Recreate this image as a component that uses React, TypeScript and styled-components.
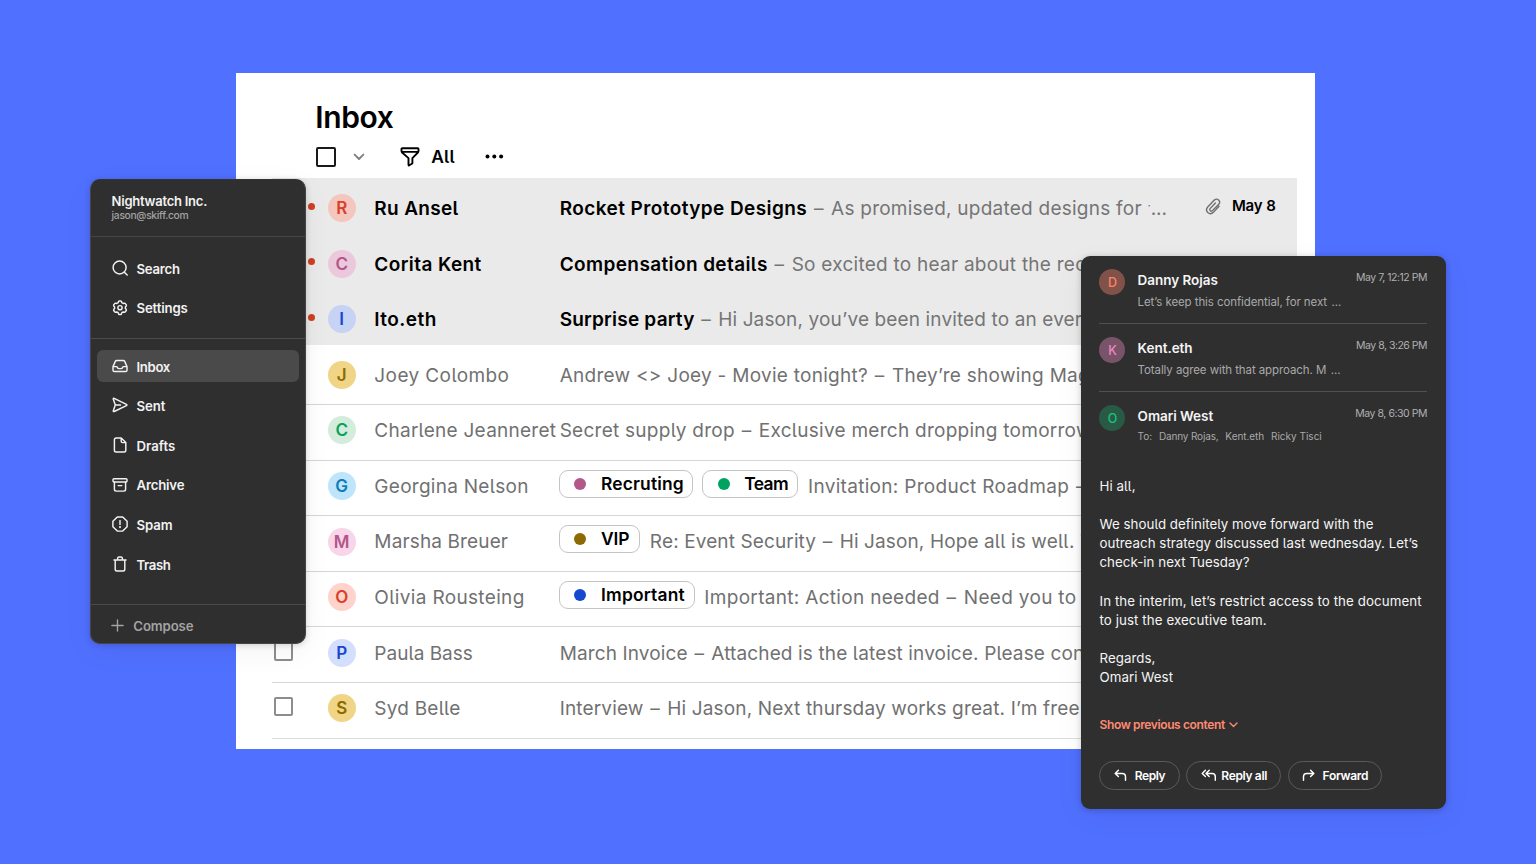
import React from "react";
import styled, { createGlobalStyle, css } from "styled-components";

const GlobalStyle = createGlobalStyle`
  *, *::before, *::after { box-sizing: border-box; }
  body { margin: 0; overflow: hidden; font-family: Inter, "Liberation Sans", sans-serif; }
  svg { display: block; flex: none; }
`;

const Stage = styled.main`
  position: relative;
  width: 1536px;
  height: 864px;
  overflow: hidden;
  background: #5070ff;
`;

const Tracked = styled.span<{ $ls?: number }>`
  letter-spacing: ${(p) => p.$ls ?? 0}px;
  white-space: pre;
`;

/* ---------- Inbox window ---------- */

const InboxWindow = styled.section`
  position: absolute;
  left: 236.3px;
  top: 73.4px;
  width: 1078.7px;
  height: 675.6px;
  padding: 0 17.7px 0 36.2px;
  background: #fff;
  font-feature-settings: "cv05";
  overflow: hidden;
`;

const InboxHeader = styled.header`
  height: 105px;
  padding: 25.5px 0 0 43.8px;
`;

const Title = styled.h1`
  margin: 0 0 0 -1px;
  font-size: 30px;
  font-weight: 600;
  line-height: 36px;
  letter-spacing: -0.4px;
  color: #000;
`;

const Toolbar = styled.div`
  display: flex;
  align-items: center;
  height: 20px;
  margin-top: 11.9px;
  font-size: 17.4px;
  font-weight: 600;
`;

const Checkbox = styled.span<{ $strong?: boolean }>`
  flex: none;
  width: ${(p) => (p.$strong ? 20 : 19.5)}px;
  height: ${(p) => (p.$strong ? 20 : 19.5)}px;
  border: ${(p) => (p.$strong ? "2px solid #1a1a1a" : "2px solid #8d8d8d")};
  border-radius: 2px;
`;

const MenuArrow = styled.span`
  margin-left: 16.4px;
`;

const FilterButton = styled.span`
  display: flex;
  align-items: center;
  gap: 11.2px;
  margin-left: 35.4px;
`;

const MoreButton = styled.span`
  margin-left: 29px;
`;

const UnreadGroup = styled.div`
  padding-top: 3.8px;
  height: 166.7px;
  margin-bottom: 4.4px;
  background: #eaeaea;
`;

const Row = styled.div<{ $unread?: boolean; $last?: boolean }>`
  display: flex;
  align-items: center;
  height: 55.6px;
  padding-bottom: 3.4px;
  font-size: 19px;
  line-height: 24px;
  color: ${(p) => (p.$unread ? "#000" : "#717171")};
  ${(p) =>
    !p.$unread &&
    css`
      padding-bottom: 3.8px;
      border-bottom: 1px solid ${p.$last ? "#dedede" : "#d6d6d6"};
    `}
`;

const Marker = styled.span`
  flex: none;
  display: flex;
  justify-content: space-between;
  align-items: center;
  width: 55.2px;
  padding: 0 12.3px 4px 1.3px;
`;

const UnreadDot = styled.i`
  width: 7px;
  height: 7px;
  margin-left: auto;
  border-radius: 50%;
  background: #cf4022;
`;

const Avatar = styled.span<{ $bg: string; $fg: string }>`
  flex: none;
  display: grid;
  place-items: center;
  width: 28px;
  height: 28px;
  margin-right: 18.7px;
  border-radius: 50%;
  background: ${(p) => p.$bg};
  color: ${(p) => p.$fg};
  font-size: 17px;
  font-weight: 600;
`;

const Sender = styled.span<{ $ls: number; $unread?: boolean }>`
  flex: none;
  width: 185.3px;
  padding-top: 1.5px;
  white-space: nowrap;
  letter-spacing: ${(p) => p.$ls}px;
  font-weight: ${(p) => (p.$unread ? 600 : 400)};
`;

const Subject = styled.span`
  flex: 1;
  display: flex;
  align-items: center;
  min-width: 0;
  padding-top: 1.5px;
  white-space: pre;
`;

const SubjectTitle = styled(Tracked)`
  font-weight: 600;
`;

const Preview = styled(Tracked)`
  color: #757575;
`;

const Dash = styled.span`
  margin: 0 1.8px 0 1.2px;
`;

const Speck = styled.span`
  padding-bottom: 6px;
  color: #757575;
  font-size: 12px;
`;

const Dots = styled.span`
  letter-spacing: -0.2px;
  color: #757575;
`;

const Tag = styled.span<{ $w: number }>`
  flex: none;
  display: flex;
  align-items: center;
  width: ${(p) => p.$w}px;
  height: 28px;
  margin: -6.1px 9.8px 0 -0.6px;
  padding-left: 14.4px;
  border: 1.4px solid #c4c4c4;
  border-radius: 9px;
  color: #000;
  font-size: 17.4px;
  font-weight: 600;
`;

const TagDot = styled.i<{ $c: string }>`
  flex: none;
  width: 12px;
  height: 12px;
  margin-right: 14.6px;
  border-radius: 50%;
  background: ${(p) => p.$c};
`;

const Meta = styled.span`
  display: flex;
  align-items: center;
  gap: 11.4px;
  padding: 0 21.6px 4px 0;
  font-size: 15px;
  font-weight: 600;
  letter-spacing: -0.12px;
`;

/* ---------- Sidebar ---------- */

const Sidebar = styled.nav`
  position: absolute;
  left: 90.3px;
  top: 179px;
  width: 215.3px;
  height: 465.4px;
  border: 1px solid #454545;
  border-top-color: #333;
  border-radius: 10px;
  background: #2f2f2f;
  box-shadow: 0 1px 6px rgba(0, 0, 0, 0.16), 0 8px 30px rgba(0, 0, 0, 0.05);
  color: #f2f2f2;
  overflow: hidden;
`;

const Account = styled.header`
  height: 57.3px;
  padding: 12.8px 0 0 20.3px;
  border-bottom: 1.4px solid #464646;
`;

const AccountName = styled.div`
  font-size: 13px;
  font-weight: 600;
  line-height: 16px;
  letter-spacing: -0.24px;
`;

const AccountEmail = styled.div`
  margin-top: -0.8px;
  font-size: 10.3px;
  font-weight: 500;
  line-height: 14px;
  letter-spacing: -0.33px;
  color: #a3a3a3;
`;

const NavGroup = styled.div<{ $h: number; $top: number }>`
  display: flex;
  flex-direction: column;
  gap: 7.6px;
  height: ${(p) => p.$h}px;
  padding: ${(p) => p.$top}px 6px 0 6px;
  border-bottom: 1.2px solid #4a4a4a;
`;

const NavItem = styled.a<{ $active?: boolean; $ls: number }>`
  flex: none;
  display: flex;
  align-items: center;
  gap: 8.2px;
  height: 32px;
  padding: 1px 0 0 15px;
  border-radius: 6px;
  background: ${(p) => (p.$active ? "#4a4a4a" : "transparent")};
  font-size: 13.2px;
  font-weight: 600;
  letter-spacing: ${(p) => p.$ls}px;

  svg {
    margin-top: -1.6px;
  }
`;

const Compose = styled.div`
  display: flex;
  align-items: center;
  gap: 9px;
  height: 41px;
  padding: 0.6px 0 0 20px;
  font-size: 13.2px;
  font-weight: 600;
  letter-spacing: -0.12px;
  color: #a3a3a3;

  svg {
    margin-top: -1.4px;
  }
`;

/* ---------- Thread window ---------- */

const Thread = styled.section`
  position: absolute;
  left: 1080.6px;
  top: 256px;
  width: 365.4px;
  height: 552.6px;
  padding: 0 19px 0 18.9px;
  border-radius: 9px;
  background: #2f2f2f;
  box-shadow: 0 1px 6px rgba(0, 0, 0, 0.2), 0 8px 30px rgba(0, 0, 0, 0.05);
  color: #f5f5f5;
  overflow: hidden;
`;

const Message = styled.article<{ $first?: boolean; $open?: boolean }>`
  display: flex;
  height: ${(p) => (p.$first ? 67.8 : 68)}px;
  padding-top: ${(p) => (p.$first ? 12.6 : 12.8)}px;
  border-bottom: ${(p) => (p.$open ? "none" : "1px solid #505050")};
`;

const SmallAvatar = styled.span<{ $bg: string; $fg: string }>`
  flex: none;
  display: grid;
  place-items: center;
  width: 26px;
  height: 26px;
  margin-right: 12.1px;
  padding-top: 1px;
  border-radius: 50%;
  background: ${(p) => p.$bg};
  color: ${(p) => p.$fg};
  font-size: 12.5px;
  font-weight: 500;
`;

const MessageText = styled.div`
  flex: 1;
  padding-top: 3.6px;
`;

const MessageName = styled.div`
  font-size: 13.5px;
  font-weight: 600;
  line-height: 16px;
  letter-spacing: -0.04px;
`;

const MessagePreview = styled.div`
  display: flex;
  gap: 4.6px;
  margin-top: 6.2px;
  font-size: 11.5px;
  line-height: 16px;
  letter-spacing: -0.09px;
  color: #a9a9a9;
`;

const Recipients = styled.div`
  display: flex;
  gap: 6.8px;
  margin-top: 5px;
  font-size: 10px;
  line-height: 14px;
  color: #a9a9a9;
`;

const MessageDate = styled.time<{ $ls: number }>`
  padding-top: 2px;
  font-size: 10.5px;
  line-height: 14px;
  letter-spacing: ${(p) => p.$ls}px;
  color: #b0b0b0;
  white-space: nowrap;
`;

const Body = styled.div`
  margin-top: 16.9px;
  font-size: 13.3px;
  line-height: 19px;
  font-feature-settings: "cv05";
  white-space: nowrap;
`;

const Paragraph = styled.p<{ $ls?: number }>`
  margin: 0 0 19.6px;
  letter-spacing: ${(p) => p.$ls ?? 0.06}px;
`;

const ShowPrevious = styled.div`
  display: flex;
  align-items: center;
  gap: 4.6px;
  height: 16px;
  margin-top: 29.3px;
  color: #ff8a72;
  font-size: 12px;
  font-weight: 600;
  letter-spacing: -0.37px;
`;

const Actions = styled.footer`
  display: flex;
  gap: 6.4px;
  margin-top: 28.4px;
`;

const PillButton = styled.button<{ $w: number; $ls: number; $gap: number }>`
  display: flex;
  align-items: center;
  gap: ${(p) => p.$gap}px;
  width: ${(p) => p.$w}px;
  height: 29px;
  margin: 0;
  padding: 0 0 0 13.5px;
  border: 1px solid #5a5a5a;
  border-radius: 15px;
  background: transparent;
  color: #fff;
  font: 600 12px Inter, sans-serif;
  letter-spacing: ${(p) => p.$ls}px;
  white-space: nowrap;
`;

/* ---------- Icons ---------- */

const Icon = ({
  size = 16,
  w,
  box = "0 0 16 16",
  stroke = 1.45,
  children,
}: {
  size?: number;
  w?: number;
  box?: string;
  stroke?: number;
  children: React.ReactNode;
}) => (
  <svg
    width={w ?? size}
    height={size}
    viewBox={box}
    fill="none"
    stroke="currentColor"
    strokeWidth={stroke}
    strokeLinecap="round"
    strokeLinejoin="round"
  >
    {children}
  </svg>
);

const SearchIcon = () => (
  <Icon>
    <circle cx="7.6" cy="7.5" r="6.5" />
    <path d="M12.3 12.2 15.2 15.1" />
  </Icon>
);
const SettingsIcon = () => (
  <Icon>
    <path d="M6.5 1.6Q6.7.9 7.4.9h1.2q.7 0 .9.7l.35 1.1 1.3.75 1.15-.25q.7-.15 1.05.45l.95 1.25q.35.6-.1 1.15l-.8.9v1.5l.8.9q.45.55.1 1.15l-.95 1.25q-.35.6-1.05.45l-1.15-.25-1.3.75-.35 1.1q-.2.7-.9.7H7.4q-.7 0-.9-.7l-.35-1.1-1.3-.75-1.15.25q-.7.15-1.05-.45l-.95-1.25q-.35-.6.1-1.15l.8-.9v-1.5l-.8-.9q-.45-.55-.1-1.15l.95-1.25q.35-.6 1.05-.45l1.15.25 1.3-.75z" />
    <circle cx="8" cy="7.7" r="2.1" />
  </Icon>
);
const InboxIcon = () => (
  <Icon>
    <path d="M1 8.6 3.3 3.4Q3.7 2.5 4.7 2.5h6.6q1 0 1.4.9L15 8.6v3.6q0 1.3-1.3 1.3H2.3Q1 13.5 1 12.2zM1 8.6h3.4q.7 0 1 .8.4 1.2 1.6 1.2h2q1.2 0 1.6-1.2.3-.8 1-.8H15" />
  </Icon>
);
const SentIcon = () => (
  <Icon>
    <path d="M3.3 8 1.3 2.2Q1 1 2.2 1.4L14.4 7.3q1 .6 0 1.3L2.2 14.5Q1 15 1.3 13.7zM3.5 8H8.6" />
  </Icon>
);
const DraftIcon = () => (
  <Icon>
    <path d="M9.2 1H4.2Q2.4 1 2.4 2.8v10.4Q2.4 15 4.2 15h7.8q1.8 0 1.8-1.8V5.6zM9.2 1v3.2q0 1.4 1.4 1.4h3.2" />
  </Icon>
);
const ArchiveIcon = () => (
  <Icon>
    <rect x="1" y="1.8" width="14" height="3.2" rx="1" />
    <path d="M2.4 5v7.3q0 1.8 1.8 1.8h7.6q1.8 0 1.8-1.8V5M6.2 8.6h3.6" />
  </Icon>
);
const SpamIcon = () => (
  <Icon>
    <path d="M5.3.9h5.4L15.1 5.3v5.4L10.7 15.1H5.3L.9 10.7V5.3z" />
    <path d="M8 4.6v4" />
    <circle cx="8" cy="11.1" r=".4" />
  </Icon>
);
const TrashIcon = () => (
  <Icon>
    <path d="M2 3.9h12M3.2 3.9v9.3Q3.2 15 5 15h6q1.8 0 1.8-1.8V3.9M5.6 3.7V2.6Q5.6 1 7.2 1h1.6q1.6 0 1.6 1.6v1.1" />
  </Icon>
);
const PlusIcon = () => (
  <Icon size={13} box="0 0 13 13" stroke={1.4}>
    <path d="M6.5.9v11.2M.9 6.5h11.2" />
  </Icon>
);
const FunnelIcon = () => (
  <Icon size={20} box="0 0 20 20" stroke={1.9}>
    <path d="M2.2 1.2h15.6q.7 0 .7.7v2.2q0 .8-.6 1.4L12.4 11.1v4.9q0 .5-.5.8l-2.6 1.5q-.8.4-.8-.5v-6.7L2.1 5.5q-.6-.6-.6-1.4V1.9q0-.7.7-.7zM2 4.9h16" />
  </Icon>
);
const MenuArrowIcon = () => (
  <Icon w={12} size={8} box="0 0 12 8" stroke={1.9}>
    <path d="M1.6 1.6 6 6l4.4-4.4" stroke="#808080" />
  </Icon>
);
const ChevronIcon = () => (
  <Icon w={9} size={6} box="0 0 9 6" stroke={1.4}>
    <path d="M1 1 4.5 4.4 8 1" />
  </Icon>
);
const MoreIcon = () => (
  <svg width="20" height="6" viewBox="0 0 20 6" fill="#000">
    <circle cx="3.5" cy="2.6" r="2" />
    <circle cx="10.3" cy="2.6" r="2" />
    <circle cx="17.1" cy="2.6" r="2" />
  </svg>
);
const ClipIcon = () => (
  <svg
    width="16"
    height="17"
    viewBox="0 0 16 17"
    fill="none"
    stroke="#6f6f6f"
    strokeWidth="1.4"
    strokeLinecap="round"
  >
    <path d="M14 8.2 8.6 14.1Q5.6 17.1 2.8 14.6.2 11.9 2.7 9L9.3 2.1Q11.6.2 13.6 2q2 2.1.2 4.2L7.6 12.6q-1.2 1.1-2.3.1-1.1-1.1 0-2.3L10.4 5" />
  </svg>
);
const ReplyIcon = () => (
  <Icon w={13} size={13} box="0 0 13 13">
    <path d="M4.4 1.2 1.2 4.4l3.2 3.2M1.4 4.4h6.9q3.2 0 3.2 3.2v3.6" />
  </Icon>
);
const ReplyAllIcon = () => (
  <Icon w={16} size={13} box="0 0 16 13">
    <path d="M4.4 1.2 1.2 4.4l3.2 3.2M8.2 1.2 5 4.4l3.2 3.2M5.2 4.4h5.9q3.2 0 3.2 3.2v3.6" />
  </Icon>
);
const ForwardIcon = () => (
  <Icon w={13} size={13} box="0 0 13 13">
    <path d="M8.6 1.2l3.2 3.2-3.2 3.2M11.6 4.4H4.7Q1.5 4.4 1.5 7.6v3.6" />
  </Icon>
);

/* ---------- Data ---------- */

type Mail = {
  from: string;
  ls: number;
  bg: string;
  fg: string;
  title?: string;
  titleLs?: number;
  text: string;
  textLs: number;
  tags?: { label: string; c: string; w: number; ls: number }[];
  date?: string;
};

const unread: Mail[] = [
  { from: "Ru Ansel", ls: 0.32, bg: "#f5c6be", fg: "#d5412a", title: "Rocket Prototype Designs", titleLs: 0.42, text: " – As promised, updated designs for ", textLs: 0.24, date: "May 8" },
  { from: "Corita Kent", ls: 0.4, bg: "#ecc8dc", fg: "#b3568a", title: "Compensation details", titleLs: 0.39, text: " – So excited to hear about the rec", textLs: 0.25 },
  { from: "Ito.eth", ls: 0.45, bg: "#c6d3f4", fg: "#1549cf", title: "Surprise party", titleLs: 0.22, text: " – Hi Jason, you’ve been invited to an ever", textLs: 0.13 },
];

const read: Mail[] = [
  { from: "Joey Colombo", ls: 0.4, bg: "#f0d587", fg: "#8c6a00", text: "Andrew <> Joey - Movie tonight? – They’re showing Mag", textLs: 0.27 },
  { from: "Charlene Jeanneret", ls: 0.25, bg: "#d3ecdb", fg: "#0aa160", text: "Secret supply drop – Exclusive merch dropping tomorrow", textLs: 0.26 },
  {
    from: "Georgina Nelson", ls: 0.27, bg: "#bfe5fa", fg: "#0d7cb8", text: "Invitation: Product Roadmap – ", textLs: 0.3,
    tags: [
      { label: "Recruting", c: "#b3568a", w: 134, ls: 0.15 },
      { label: "Team", c: "#00a35e", w: 96, ls: -0.6 },
    ],
  },
  { from: "Marsha Breuer", ls: 0.13, bg: "#f8d5e8", fg: "#b3568a", text: "Re: Event Security – Hi Jason, Hope all is well. T", textLs: 0.12, tags: [{ label: "VIP", c: "#8c6a00", w: 81, ls: -0.1 }] },
  { from: "Olivia Rousteing", ls: 0.34, bg: "#ffd3cb", fg: "#d5412a", text: "Important: Action needed – Need you to", textLs: 0.31, tags: [{ label: "Important", c: "#1549cf", w: 135.5, ls: 0.18 }] },
  { from: "Paula Bass", ls: 0, bg: "#d3dffd", fg: "#1549cf", text: "March Invoice – Attached is the latest invoice. Please con", textLs: 0.13 },
  { from: "Syd Belle", ls: 0.22, bg: "#f0d587", fg: "#8c6a00", text: "Interview – Hi Jason, Next thursday works great. I’m free", textLs: 0.16 },
];

const withDash = (text: string) => {
  const [before, after] = text.split("–");
  return (
    <>
      {before}
      <Dash>–</Dash>
      {after}
    </>
  );
};

const MailRow = ({ mail, isUnread, last }: { mail: Mail; isUnread?: boolean; last?: boolean }) => (
  <Row $unread={isUnread} $last={last}>
    <Marker>{isUnread ? <UnreadDot /> : <Checkbox />}</Marker>
    <Avatar $bg={mail.bg} $fg={mail.fg}>
      {mail.from[0]}
    </Avatar>
    <Sender $ls={mail.ls} $unread={isUnread}>
      {mail.from}
    </Sender>
    <Subject>
      {mail.tags?.map((t) => (
        <Tag key={t.label} $w={t.w}>
          <TagDot $c={t.c} />
          <Tracked $ls={t.ls}>{t.label}</Tracked>
        </Tag>
      ))}
      {mail.title && <SubjectTitle $ls={mail.titleLs}>{mail.title}</SubjectTitle>}
      {mail.title ? (
        <Preview $ls={mail.textLs}>{withDash(mail.text)}</Preview>
      ) : (
        <Tracked $ls={mail.textLs}>{withDash(mail.text)}</Tracked>
      )}
      {mail.date && (
        <>
          <Speck>·</Speck>
          <Dots>...</Dots>
        </>
      )}
    </Subject>
    {mail.date && (
      <Meta>
        <ClipIcon />
        <span>{mail.date}</span>
      </Meta>
    )}
  </Row>
);

export default function App() {
  return (
    <>
      <GlobalStyle />
      <Stage>
        <InboxWindow>
          <InboxHeader>
            <Title>Inbox</Title>
            <Toolbar>
              <Checkbox $strong />
              <MenuArrow>
                <MenuArrowIcon />
              </MenuArrow>
              <FilterButton>
                <FunnelIcon />
                <Tracked $ls={0.2}>All</Tracked>
              </FilterButton>
              <MoreButton>
                <MoreIcon />
              </MoreButton>
            </Toolbar>
          </InboxHeader>
          <UnreadGroup>
            {unread.map((m) => (
              <MailRow key={m.from} mail={m} isUnread />
            ))}
          </UnreadGroup>
          {read.map((m, i) => (
            <MailRow key={m.from} mail={m} last={i === read.length - 1} />
          ))}
        </InboxWindow>

        <Sidebar>
          <Account>
            <AccountName>Nightwatch Inc.</AccountName>
            <AccountEmail>jason@skiff.com</AccountEmail>
          </Account>
          <NavGroup $h={102} $top={15}>
            <NavItem $ls={-0.26}><SearchIcon />Search</NavItem>
            <NavItem $ls={-0.15}><SettingsIcon />Settings</NavItem>
          </NavGroup>
          <NavGroup $h={266} $top={10.8}>
            <NavItem $ls={-0.35} $active><InboxIcon />Inbox</NavItem>
            <NavItem $ls={-0.1}><SentIcon />Sent</NavItem>
            <NavItem $ls={0.04}><DraftIcon />Drafts</NavItem>
            <NavItem $ls={-0.18}><ArchiveIcon />Archive</NavItem>
            <NavItem $ls={-0.12}><SpamIcon />Spam</NavItem>
            <NavItem $ls={-0.4}><TrashIcon />Trash</NavItem>
          </NavGroup>
          <Compose><PlusIcon />Compose</Compose>
        </Sidebar>

        <Thread>
          <Message $first>
            <SmallAvatar $bg="#80524a" $fg="#ff8268">D</SmallAvatar>
            <MessageText>
              <MessageName>Danny Rojas</MessageName>
              <MessagePreview><span>Let’s keep this confidential, for next</span><span>...</span></MessagePreview>
            </MessageText>
            <MessageDate $ls={-0.48}>May 7, 12:12 PM</MessageDate>
          </Message>
          <Message>
            <SmallAvatar $bg="#795468" $fg="#ea88c0">K</SmallAvatar>
            <MessageText>
              <MessageName>Kent.eth</MessageName>
              <MessagePreview><span>Totally agree with that approach. M</span><span>...</span></MessagePreview>
            </MessageText>
            <MessageDate $ls={-0.5}>May 8, 3:26 PM</MessageDate>
          </Message>
          <Message $open>
            <SmallAvatar $bg="#285a45" $fg="#18c37a">O</SmallAvatar>
            <MessageText>
              <MessageName>Omari West</MessageName>
              <Recipients>
                <span>To:</span>
                <Tracked $ls={-0.15}>Danny Rojas,</Tracked>
                <Tracked $ls={-0.05}>Kent.eth</Tracked>
                <Tracked>Ricky Tisci</Tracked>
              </Recipients>
            </MessageText>
            <MessageDate $ls={-0.46}>May 8, 6:30 PM</MessageDate>
          </Message>
          <Body>
            <Paragraph>Hi all,</Paragraph>
            <Paragraph $ls={0.04}>
              We should definitely move forward with the
              <br />
              outreach strategy discussed last wednesday. Let’s
              <br />
              check-in next Tuesday?
            </Paragraph>
            <Paragraph $ls={0.09}>
              In the interim, let’s restrict access to the document
              <br />
              to just the executive team.
            </Paragraph>
            <Paragraph>
              Regards,
              <br />
              Omari West
            </Paragraph>
          </Body>
          <ShowPrevious>
            Show previous content
            <ChevronIcon />
          </ShowPrevious>
          <Actions>
            <PillButton $w={80.4} $ls={-0.42} $gap={7.8}><ReplyIcon />Reply</PillButton>
            <PillButton $w={95.2} $ls={-0.35} $gap={4.6}><ReplyAllIcon />Reply all</PillButton>
            <PillButton $w={94.4} $ls={-0.31} $gap={7.2}><ForwardIcon />Forward</PillButton>
          </Actions>
        </Thread>
      </Stage>
    </>
  );
}
